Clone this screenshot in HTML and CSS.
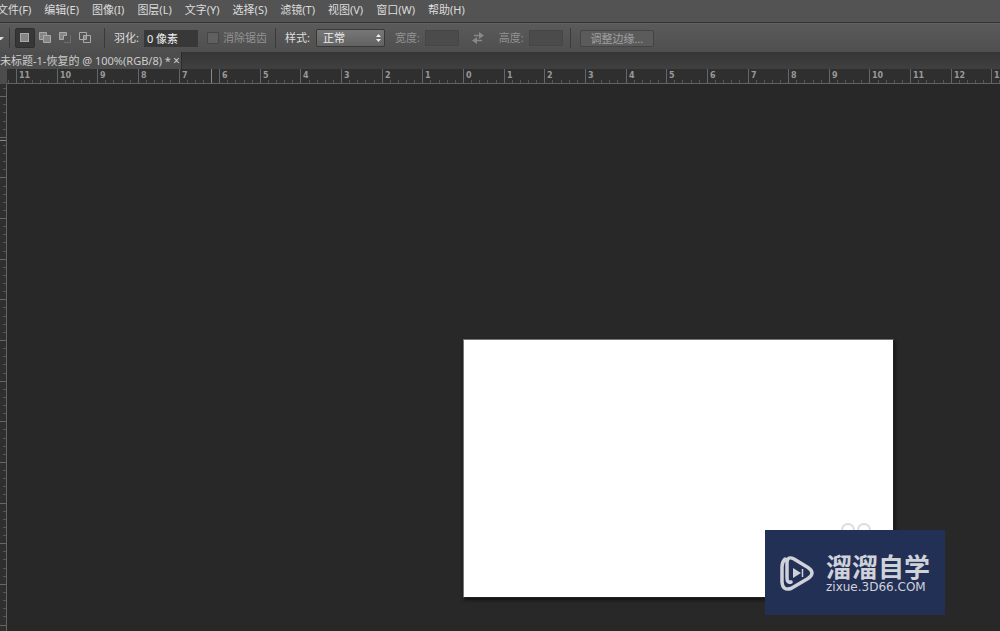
FILE: index.html
```html
<!DOCTYPE html>
<html lang="zh-CN">
<head>
<meta charset="utf-8">
<title>未标题-1</title>
<link rel="stylesheet" href="styles.css">
</head>
<body>
<div class="app">
  <nav class="menu">
    <button>文件(F)</button><button>编辑(E)</button><button>图像(I)</button><button>图层(L)</button><button>文字(Y)</button><button>选择(S)</button><button>滤镜(T)</button><button>视图(V)</button><button>窗口(W)</button><button>帮助(H)</button>
  </nav>
  <div class="options">
    <svg class="caret" viewBox="0 0 4 12"><path d="M0 5h4L1 8H0z" fill="#ddd"/></svg>
    <span class="sep"></span>
    <div class="modes">
      <button class="mode active" aria-label="新选区"><svg viewBox="0 0 12 12"><rect x="1.500" y="1.500" width="8" height="8" fill="#858585" stroke="#aaa"/></svg></button>
      <button class="mode" aria-label="添加到选区"><svg viewBox="0 0 12 12"><path d="M.5.5h7v3h4v7h-7v-3h-4z" fill="#858585" stroke="#aaa"/><path d="M4.500 7.500v-4h3" fill="none" stroke="#aaa"/></svg></button>
      <button class="mode" aria-label="从选区减去"><svg viewBox="0 0 12 12"><path d="M.5.5h7v3h-3v4h-4z" fill="#858585" stroke="#aaa"/><path d="M11.500 3.500v7h-7" fill="none" stroke="#888" stroke-dasharray="1 1"/></svg></button>
      <button class="mode" aria-label="与选区交叉"><svg viewBox="0 0 12 12"><g fill="none" stroke="#aaa"><path d="M.5.5h7v7h-7z"/><path d="M4.500 3.500h7v7h-7z"/></g><path d="M5 4h2v3H5z" fill="#888"/></svg></button>
    </div>
    <span class="sep"></span>
    <label class="feather">羽化:<input type="text" value="0 像素"></label>
    <label class="alias dim"><input type="checkbox" disabled>消除锯齿</label>
    <span class="sep"></span>
    <label class="style">样式:<span class="pick"><select><option>正常</option></select><svg viewBox="0 0 7 8"><path d="M1 3l2.500-3L6 3zM1 5h5L3.500 8z" fill="#eee"/></svg></span></label>
    <label class="size dim">宽度:<input type="text" disabled></label>
    <button class="swap" aria-label="交换" disabled><svg viewBox="0 0 12 12"><path d="M2 3.500h6M4 8.500h6" stroke="#888" stroke-width="1.500"/><path d="M7 0l5 3.500L7 7zM5 5L0 8.500 5 12z" fill="#888"/></svg></button>
    <label class="size dim">高度:<input type="text" disabled></label>
    <span class="sep last"></span>
    <button class="refine" disabled>调整边缘...</button>
  </div>
  <div class="tabs"><div class="tab"><span>未标题-1-恢复的 @ 100%(RGB/8) *</span><button aria-label="关闭">×</button></div></div>
  <div class="workspace">
    <div class="corner"></div>
    <svg class="ruler top" id="top"></svg>
    <svg class="ruler side" id="side"></svg>
    <main class="stage">
      <div class="paper"><svg class="ghost" viewBox="0 0 32 16"><circle cx="8" cy="8" r="6"/><circle cx="24" cy="8" r="6"/></svg></div>
      <div class="brand">
        <svg viewBox="0 0 34 36"><path d="M5 4Q2 7 2 12V27Q2.500 36 11 33.500L28 23.500Q36 18 28 12.500L14 4Q7 .5 7 8V23Q7 28 11 27" fill="none" stroke="#d0d2d9" stroke-width="3.500" stroke-linecap="round" stroke-linejoin="round"/><path d="M13 13l8 5-8 5z" fill="#d0d2d9"/><path d="M22.500 14v8" stroke="#d0d2d9" stroke-width="1.500"/></svg>
        <div><div class="name">溜溜自学</div><div class="site">zixue.3D66.COM</div></div>
      </div>
    </main>
  </div>
</div>
<script src="ruler.js"></script>
</body>
</html>
```
FILE: styles.css
```css
* { box-sizing: border-box; }
body { margin: 0; background: #282828; color: #ddd; font: 11px/16px "Noto Sans", "Noto Sans CJK SC", sans-serif; overflow: hidden; }
button, input, select { font: inherit; color: inherit; margin: 0; padding: 0; border: 0; background: none; }
svg { display: block; }
.app { display: flex; flex-direction: column; height: 100vh; }
.menu { display: flex; gap: 13px; height: 23px; flex: none; align-items: center; padding-bottom: 2px; background: #535353; border-bottom: 1px solid #333; }
.menu button { white-space: nowrap; }
.menu button:first-child { margin-left: -3px; }
.options { display: flex; height: 29px; flex: none; align-items: center; background: linear-gradient(#5a5a5a, #4f4f4f); border-top: 1px solid #626262; white-space: nowrap; }
.caret { width: 4px; height: 12px; }
.sep { width: 1px; height: 20px; background: #3a3a3a; margin: 0 5px; }
.modes { display: flex; margin-right: 4px; }
.mode { width: 20px; height: 20px; display: grid; place-items: center; }
.mode svg { width: 12px; height: 12px; }
.active { background: #373737; border: 1px solid #2e2e2e; border-radius: 2px; }
.options label { display: flex; align-items: center; }
.feather { margin-left: 4px; }
.feather input { width: 54px; height: 17px; margin-left: 5px; padding-left: 3px; background: #383838; color: #f0f0f0; }
.dim { color: #929292; }
.alias { margin: 0 3px 0 9px; }
.alias input { appearance: none; width: 12px; height: 12px; margin-right: 4px; border: 1px solid #454545; background: #606060; border-radius: 1px; }
.style { margin-left: 4px; }
.pick { position: relative; margin-left: 6px; }
.pick select { appearance: none; display: block; width: 69px; height: 18px; padding-left: 6px; color: #f0f0f0; background: linear-gradient(#777, #626262); border: 1px solid #383838; border-radius: 2px; line-height: 16px; }
.pick svg { position: absolute; right: 3px; top: 5px; width: 7px; height: 8px; }
.size { margin-left: 10px; }
.size input { width: 34px; height: 16px; margin-left: 5px; background: #4b4b4b; border: 1px solid #464646; }
.swap { width: 12px; margin: 0 0 0 13px; }
.swap svg { width: 12px; height: 12px; }
.swap + .size { margin-left: 15px; }
.last { margin: 0 9px 0 7px; }
.refine { width: 74px; height: 17px; color: #a0a0a0; background: #5b5b5b; border: 1px solid #444; border-radius: 2px; line-height: 15px; }
.tabs { height: 17px; flex: none; display: flex; background: linear-gradient(#353535, #404040); }
.tab { display: flex; align-items: center; gap: 2px; width: 182px; background: #4d4d4d; border-right: 1px solid #2c2c2c; color: #ccc; white-space: nowrap; }
.tab button { font-size: 12px; line-height: 12px; }
.workspace { flex: 1; min-height: 0; display: grid; grid-template-columns: 7px 1fr; grid-template-rows: 15px 1fr; }
.corner { background: #4c4c4c; }
.ruler { background: #2f2f2f; width: 100%; height: 100%; min-height: 0; overflow: hidden; }
.ruler text { font: bold 8px "DejaVu Sans", sans-serif; fill: #999; }
.top { border-bottom: 1px solid #636363; }
.side { border-right: 1px solid #636363; }
.stage { position: relative; overflow: hidden; }
.paper { position: absolute; left: 456px; top: 255px; width: 431px; height: 259px; background: #fff; border: 1px solid #777; border-right-color: #222; border-bottom-color: #222; box-shadow: 1px 2px 3px #111; }
.ghost { position: absolute; left: 376px; top: 182px; width: 32px; height: 16px; fill: none; stroke: #ddd; stroke-width: 2; }
.brand { position: absolute; left: 758px; top: 446px; width: 180px; height: 85px; display: flex; align-items: center; gap: 12px; padding-left: 15px; background: #233056; color: #d0d2d9; }
.brand svg { width: 34px; height: 36px; }
.name { font: 700 26px/28px "Noto Sans CJK SC", sans-serif; white-space: nowrap; }
.site { font: 12px/14px "DejaVu Sans", sans-serif; white-space: nowrap; }
```
FILE: ruler.js
```js
const NS = 'http://www.w3.org/2000/svg';
const UNIT = 1138 / 28;

function add(parent, name, attrs, text) {
  const el = document.createElementNS(NS, name);
  for (const key in attrs) el.setAttribute(key, attrs[key]);
  if (text !== undefined) el.textContent = text;
  parent.appendChild(el);
}

function tick(svg, vertical, at, from, to, color) {
  const p = Math.round(at);
  add(svg, 'rect', vertical
    ? { x: from, y: p, width: to - from, height: 1, fill: color }
    : { x: p, y: from, width: 1, height: to - from, fill: color });
}

function draw(id, origin, vertical, size) {
  const svg = document.getElementById(id);
  const length = vertical ? svg.clientHeight : svg.clientWidth;
  for (let i = -60; i < 150; i++) {
    const at = origin + i * UNIT / 5;
    if (at < 0 || at > length) continue;
    const major = i % 5 === 0;
    tick(svg, vertical, at, major ? 0 : size - 3, size, major ? '#666' : '#555');
    if (major && !vertical) add(svg, 'text', { x: Math.round(at) + 3, y: 9 }, Math.abs(i / 5));
  }
}

draw('top', 456, false, 14);
draw('side', 256, true, 6);
tick(document.getElementById('top'), false, 204, 0, 14, '#888');
tick(document.getElementById('side'), true, 56, 0, 6, '#888');
```
